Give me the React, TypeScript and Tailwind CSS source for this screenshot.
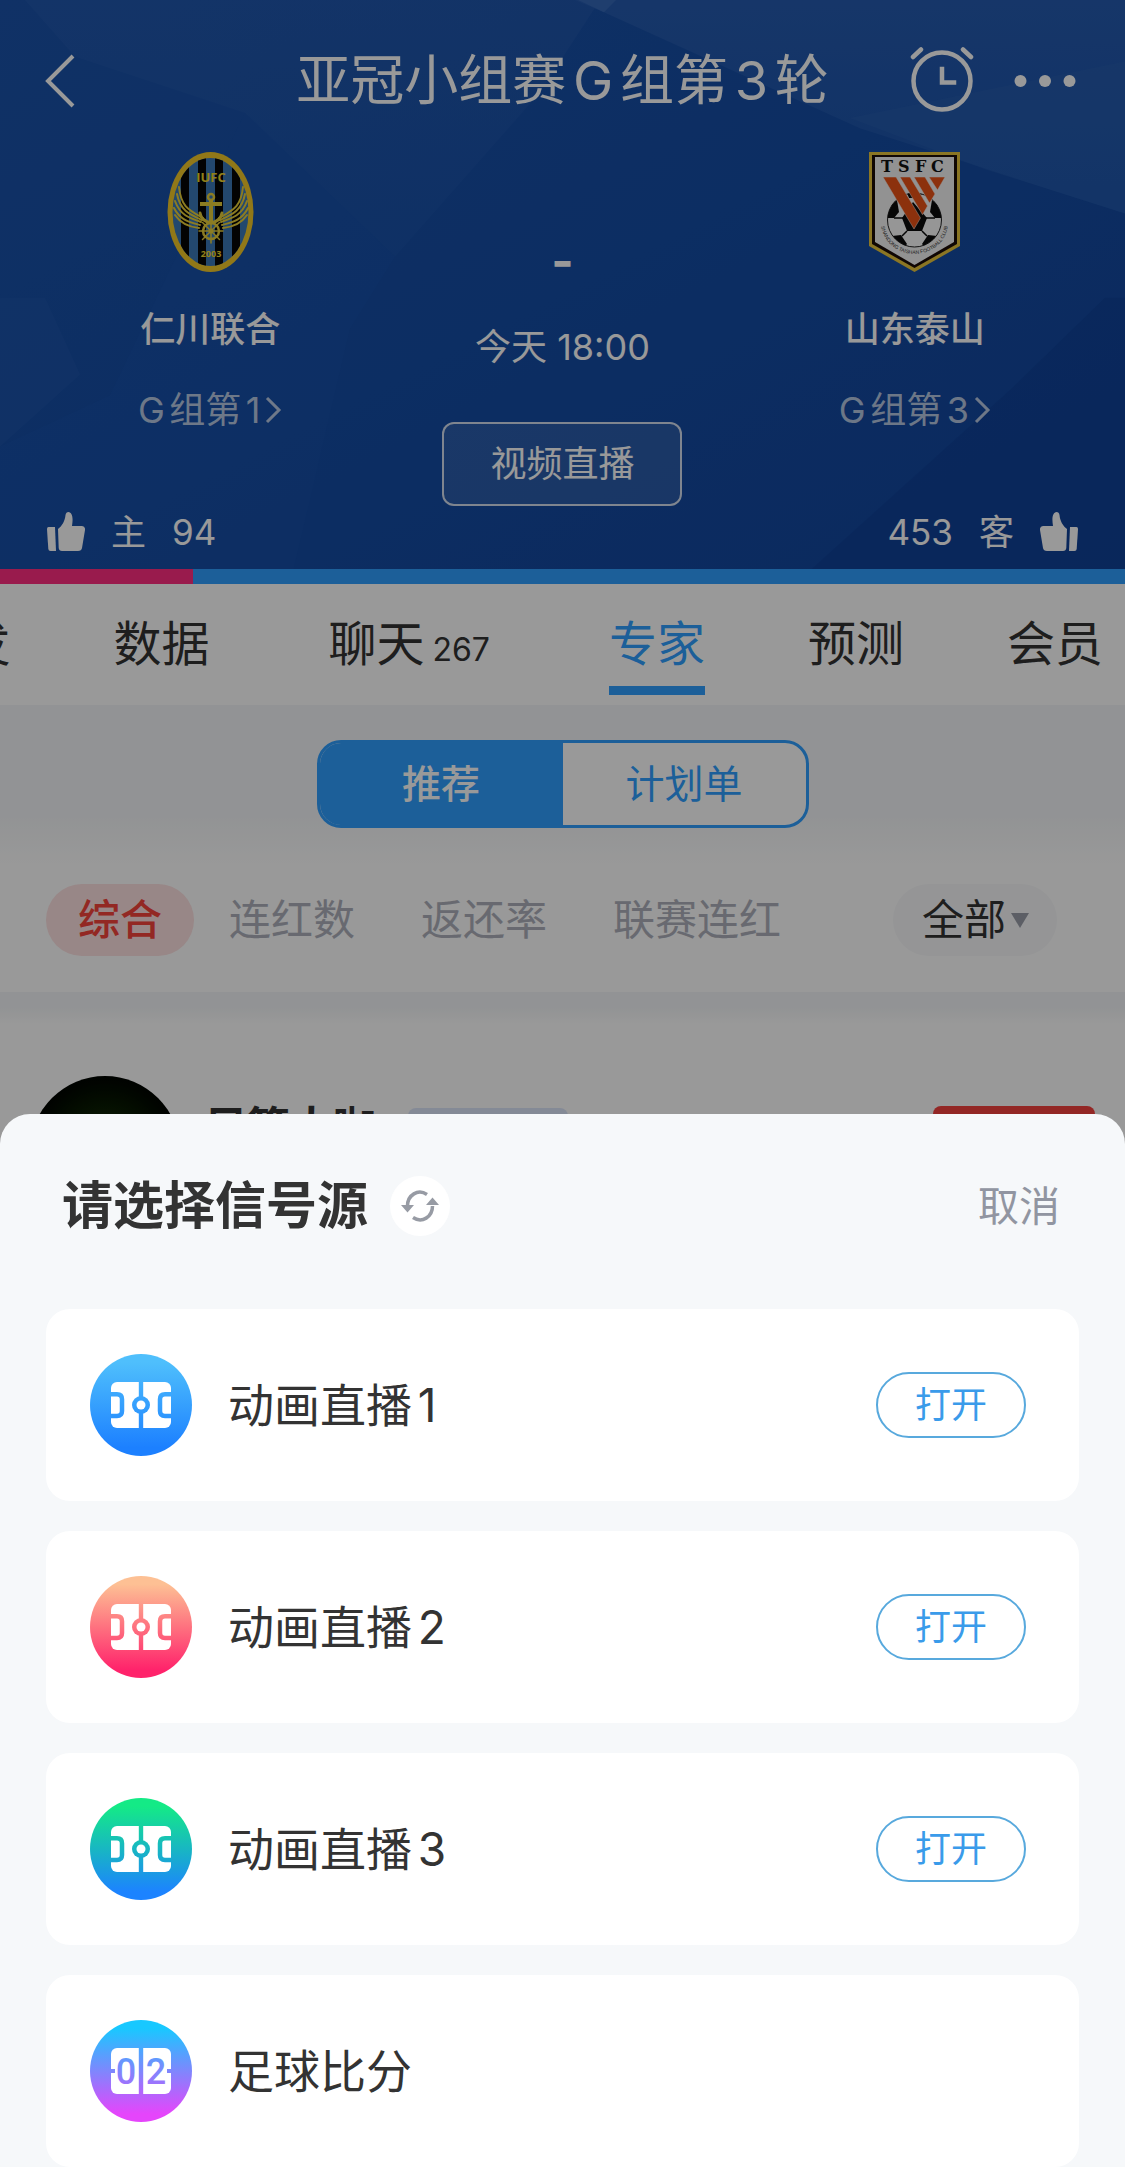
import React, { useState } from 'react';

interface SignalSource {
  id: string;
  name: string;
  from: string;
  to: string;
  kind: 'pitch' | 'score';
}

const sources: SignalSource[] = [
  { id: 'anim1', name: '动画直播1', from: '#4fbffc', to: '#1c80ff', kind: 'pitch' },
  { id: 'anim2', name: '动画直播2', from: '#fdc094', to: '#ff236b', kind: 'pitch' },
  { id: 'anim3', name: '动画直播3', from: '#14ea86', to: '#1c83ff', kind: 'pitch' },
  { id: 'score', name: '足球比分', from: '#18c8ff', to: '#e545fb', kind: 'score' },
];

const tabs = [
  { label: '首发' },
  { label: '数据' },
  { label: '聊天', count: 267 },
  { label: '专家' },
  { label: '预测' },
  { label: '会员' },
];

const filters = ['连红数', '返还率', '联赛连红'];

const HeaderBackdrop: React.FC = () => (
  <svg className="absolute inset-0 h-full w-full" viewBox="0 0 1125 569" preserveAspectRatio="none" aria-hidden="true">
    <defs>
      <linearGradient id="sky" x1="0" y1="0" x2="1" y2="1">
        <stop offset="0" stopColor="#1b53aa" />
        <stop offset="0.5" stopColor="#154da5" />
        <stop offset="1" stopColor="#12459c" />
      </linearGradient>
      <linearGradient id="facet" x1="0" y1="0" x2="0" y2="1">
        <stop offset="0" stopColor="#275cb0" />
        <stop offset="1" stopColor="#1b54aa" />
      </linearGradient>
    </defs>
    <rect width="1125" height="569" fill="url(#sky)" />
    <path d="M25 0H600L540 90L395 250L245 110L75 55Z" fill="url(#facet)" opacity="0.5" />
    <path d="M575 0L604 12L860 125L1125 208V0Z" fill="url(#facet)" opacity="0.9" />
    <path d="M578 0L604 12L616 0Z" fill="#3468b8" />
    <path d="M850 115L985 165L1125 208V60Z" fill="#3064b4" opacity="0.3" />
    <path d="M245 110L395 250L350 320L290 569H0V435L110 385Z" fill="#1a54ab" opacity="0.35" />
    <path d="M0 290H45L80 365L0 435Z" fill="#2459ae" opacity="0.4" />
    <path d="M1105 290L1010 380L795 569H1125V290Z" fill="#0f3f95" opacity="0.6" />
  </svg>
);

const IncheonCrest: React.FC = () => (
  <svg width="87" height="120" viewBox="0 0 87 120" role="img" aria-label="仁川联合">
    <defs>
      <clipPath id="oval">
        <ellipse cx="43.5" cy="60" rx="38" ry="54" />
      </clipPath>
    </defs>
    <ellipse cx="43.5" cy="60" rx="43" ry="60" fill="#f2c928" />
    <g clipPath="url(#oval)">
      <rect width="87" height="120" fill="#3b78b8" />
      <path d="M14 0h8v120h-8zM31 0h8v120h-8zM48 0h8v120h-8zM65 0h8v120h-8z" fill="#050505" />
    </g>
    <text x="44" y="30" textAnchor="middle" className="font-['Open_Sans'] text-[13px] font-bold" fill="#f2d72c">IUFC</text>
    <g fill="none" stroke="#e8cf3a" strokeLinecap="round">
      {/* wings */}
      <path d="M12 35C14 55 22 58 36 66M10 42C13 58 22 62 35 68M8 49C13 63 22 66 34 70M7 56C13 68 22 70 33 73M8 63C14 72 22 75 32 76M76 35C74 55 66 58 52 66M78 42C75 58 66 62 53 68M80 49C75 63 66 66 54 70M81 56C75 68 66 70 55 73M80 63C74 72 66 75 56 76" strokeWidth="2" />
      {/* anchor */}
      <circle cx="44" cy="45" r="3" strokeWidth="2.5" />
      <path d="M44 48V70M33 52H55" strokeWidth="4" strokeLinecap="butt" />
      <path d="M33 61C34 67 39 70 44 71C49 70 54 67 55 61" strokeWidth="3" />
      {/* wheel */}
      <circle cx="44" cy="79" r="8" strokeWidth="2.5" />
      <path d="M44 67V91M32 79H56M35.500 70.500L52.500 87.500M52.500 70.500L35.500 87.500" strokeWidth="1.500" />
    </g>
    <circle cx="44" cy="79" r="2.500" fill="#e8cf3a" />
    <text x="44" y="105" textAnchor="middle" className="font-['Open_Sans'] text-[9px] font-bold" fill="#f2d72c">2003</text>
  </svg>
);

const TaishanCrest: React.FC = () => (
  <svg width="91" height="120" viewBox="0 0 91 120" role="img" aria-label="山东泰山">
    <defs>
      <clipPath id="ball">
        <circle cx="45.500" cy="68" r="27" />
      </clipPath>
      <path id="ribbon" d="M11 66C12 88 25 101 45.500 102C66 101 79 88 80 66" />
    </defs>
    <path d="M0 0H91V94L45.500 120L0 94Z" fill="#e8c53c" />
    <path d="M3 3H88V92L45.500 116L3 92Z" fill="#1b0d08" />
    <path d="M6 5H85V90L45.500 113L6 90Z" fill="#f4f4f4" />
    <text y="20" x="12 29 46 62" className="font-['DejaVu_Serif'] text-[16px] font-bold" fill="#111">TSFC</text>
    <circle cx="45.500" cy="68" r="27" fill="#fafafa" stroke="#222" strokeWidth="1" />
    <g clipPath="url(#ball)" fill="#0a0a0a">
      <path d="M16 66L20 54L28 48L30 60L25 66Z" />
      <path d="M75 66L71 54L63 48L61 60L66 66Z" />
      <path d="M38 41H53L51 46H40Z" />
      <path d="M33 66L44 50L58 66L53 79L38 79Z" />
      <path d="M23 84L32 83L38 92L34 97L24 92Z" />
      <path d="M68 84L59 83L53 92L57 97L67 92Z" />
      <path d="M38 79L33 84M53 79L58 84M25 66H34M66 66H57" stroke="#0a0a0a" strokeWidth="1.500" />
    </g>
    <g fill="#ea5316" stroke="#f4f4f4" strokeWidth="0.500">
      <path d="M14 25H27L51.500 66L45 77Z" />
      <path d="M31 25H41L58.500 54L53.500 62.700Z" />
      <path d="M45 25H56L66 42L60.500 51Z" />
      <path d="M60 25H76L68.500 38Z" />
    </g>
    <text className="font-['Liberation_Sans'] text-[5px]" textAnchor="middle" fill="#333">
      <textPath href="#ribbon" startOffset="50%">SHANDONG TAISHAN FOOTBALL CLUB</textPath>
    </text>
  </svg>
);

const ThumbIcon: React.FC<{ className?: string }> = ({ className }) => (
  <svg width="38" height="40" viewBox="0 0 38 40" fill="#fff" className={className} aria-hidden="true">
    <path d="M1.500 15H8L9 39H3.500Q1.500 39 1.300 37L0 17Q0 15 1.500 15Z" />
    <path d="M11 17C15 14 18 9 18.500 3Q19 0 21.500 0C25 0.500 26.500 5 25 14H35Q38.500 14.500 38 18L35 36Q34.500 39 31 39H15Q12 39 11.700 36Z" />
  </svg>
);

const SourceIcon: React.FC<{ source: SignalSource }> = ({ source }) => {
  const fill = `url(#grad-${source.id})`;
  return (
    <svg width="102" height="102" viewBox="0 0 102 102" className="shrink-0" aria-hidden="true">
      <defs>
        <linearGradient id={`grad-${source.id}`} gradientUnits="userSpaceOnUse" x1="0" y1="0" x2="0" y2="102">
          <stop offset="0.080" stopColor={source.from} />
          <stop offset="0.920" stopColor={source.to} />
        </linearGradient>
      </defs>
      <circle cx="51" cy="51" r="51" fill={fill} />
      <rect x="21" y="28" width="60" height="46" rx="6" fill="#fff" />
      {source.kind === 'pitch' ? (
        <>
          <g fill="none" stroke={fill} strokeWidth="4.500">
            <path d="M20 40.200H27Q32 40.200 32 45.200V57Q32 62 27 62H20" />
            <path d="M82 40.200H75Q70 40.200 70 45.200V57Q70 62 75 62H82" />
            <path d="M48.800 27H53.200V75H48.800Z" fill={fill} stroke="none" />
          </g>
          <circle cx="51" cy="51" r="9" fill={fill} />
          <circle cx="51" cy="51" r="4.500" fill="#fff" />
        </>
      ) : (
        <>
          <path d="M48.800 27H53.200V75H48.800ZM20 49H25V53H20ZM77 49H82V53H77Z" fill={fill} />
          <g fill={fill} textAnchor="middle" className="font-['Liberation_Sans_Narrow',Roboto] text-[36px] font-medium">
            <text x="36" y="64">0</text>
            <text x="66" y="64">2</text>
          </g>
        </>
      )}
    </svg>
  );
};

const RankLink: React.FC<{ text: string }> = ({ text }) => (
  <a href="#rank" className="mt-[41px] flex items-center gap-1 text-4xl leading-10 text-white/70">
    {text}
    <svg width="18" height="28" viewBox="0 0 18 28" fill="none" stroke="currentColor" strokeWidth="3" aria-hidden="true">
      <path d="M3 2L15 14L3 26" />
    </svg>
  </a>
);

const MatchHeader: React.FC = () => (
  <header className="relative overflow-hidden text-white">
    <HeaderBackdrop />
    <div className="relative pt-[47px]">
      <div className="grid h-[62px] grid-cols-[1fr_auto_1fr] items-center pr-[49px] pl-[43px]">
        <button type="button" aria-label="返回" className="justify-self-start">
          <svg width="34" height="56" viewBox="0 0 34 56" fill="none" stroke="#fff" strokeWidth="4" aria-hidden="true">
            <path d="M30 3L5 28L30 53" />
          </svg>
        </button>
        <h1 className="pl-1.5 text-[54px] leading-[62px]">亚冠小组赛G组第3轮</h1>
        <div className="flex items-center gap-10 justify-self-end">
          <button type="button" aria-label="提醒">
            <svg width="64" height="68" viewBox="0 0 64 68" fill="none" stroke="#fff" strokeWidth="4.500" strokeLinecap="round" aria-hidden="true">
              <circle cx="32" cy="34" r="28.500" />
              <path d="M3 10L11 2.500M61 10L53 2.500" />
              <path d="M32 22V35.500H44" strokeLinecap="square" />
            </svg>
          </button>
          <button type="button" aria-label="更多">
            <svg width="62" height="14" viewBox="0 0 62 14" fill="#fff" aria-hidden="true">
              <circle cx="6.500" cy="7" r="6" />
              <circle cx="31" cy="7" r="6" />
              <circle cx="55.500" cy="7" r="6" />
            </svg>
          </button>
        </div>
      </div>

      <div className="grid grid-cols-3 px-[34px] pt-[43px]">
        <div className="flex flex-col items-center">
          <IncheonCrest />
          <span className="mt-[37px] text-[35px] leading-10 font-medium">仁川联合</span>
          <RankLink text="G组第1" />
        </div>
        <div className="flex flex-col items-center pt-[79px]">
          <span className="text-5xl leading-[60px] font-bold">-</span>
          <span className="mt-9 text-4xl leading-10">今天 18:00</span>
          <button type="button" className="mt-[55px] h-[84px] w-[240px] rounded-xl border-2 border-white/80 bg-white/10 text-4xl">
            视频直播
          </button>
        </div>
        <div className="flex flex-col items-center">
          <TaishanCrest />
          <span className="mt-[37px] text-[35px] leading-10 font-medium">山东泰山</span>
          <RankLink text="G组第3" />
        </div>
      </div>

      <div className="mt-1.5 flex justify-between px-[47px] pb-[17px] text-[35px] leading-10">
        <button type="button" className="flex items-center gap-[26px]">
          <ThumbIcon />
          <span>主</span>
          <span>94</span>
        </button>
        <button type="button" className="flex items-center gap-[26px]">
          <span>453</span>
          <span>客</span>
          <ThumbIcon className="-scale-x-100" />
        </button>
      </div>
    </div>
    <div className="relative flex h-[15px] bg-[#309fff]">
      <div className="bg-[#ff2d80]" style={{ width: `${(94 / (94 + 453)) * 100}%` }} />
    </div>
  </header>
);

const App: React.FC = () => {
  const [activeTab, setActiveTab] = useState('专家');
  const [range, setRange] = useState('全部');

  return (
    <div className="relative flex min-h-screen flex-col overflow-hidden bg-white font-[Inter,'Noto_Sans_CJK_SC',sans-serif] text-[#333] [text-autospace:normal]">
      <MatchHeader />

      <nav className="flex h-[121px] justify-end gap-[103px] overflow-hidden pr-[22px]">
        {tabs.map((tab) => (
          <button
            key={tab.label}
            type="button"
            onClick={() => setActiveTab(tab.label)}
            className={`mb-2.5 flex shrink-0 items-baseline gap-2 border-b-[9px] pt-6 text-5xl leading-[72px] ${tab.count ? 'px-4' : ''} ${activeTab === tab.label ? 'border-[#309fff] text-[#309fff]' : 'border-transparent'}`}
          >
            {tab.label}
            {tab.count && <span className="text-[32px]">{tab.count}</span>}
          </button>
        ))}
      </nav>

      <div className="flex justify-center bg-linear-to-b from-[#f4f6f8] from-70% to-white pt-[35px] pb-9">
        <div className="flex h-[88px] w-[492px] overflow-hidden rounded-3xl border-3 border-[#309fff] bg-white text-[39px]">
          <button type="button" className="flex-1 bg-[#309fff] font-medium text-white">推荐</button>
          <button type="button" className="flex-1 text-[#309fff]">计划单</button>
        </div>
      </div>

      <div className="flex items-center py-[20px] pr-[68px] pl-[46px] text-[42px] leading-[72px] text-[#adb0bb]">
        <button type="button" className="rounded-full bg-[#fee1e1] px-8 font-medium text-[#f5443b]">综合</button>
        <div className="ml-[35px] flex flex-1 gap-[66px]">
          {filters.map((name) => (
            <button key={name} type="button">{name}</button>
          ))}
        </div>
        <div className="relative">
          <select
            aria-label="范围"
            value={range}
            onChange={(e) => setRange(e.target.value)}
            className="h-[72px] w-[164px] appearance-none rounded-full bg-[#f8f9fb] pl-[29px] text-[#333]"
          >
            <option>全部</option>
          </select>
          <svg width="18" height="16" viewBox="0 0 18 16" className="pointer-events-none absolute top-7 right-7" aria-hidden="true">
            <path d="M0 1H18L9 16Z" fill="#9a9da8" />
          </svg>
        </div>
      </div>
      <div className="mt-4 h-8 bg-linear-to-b from-[#f4f6f8] from-50% to-white" />

      <article className="flex px-[30px] pt-[52px]">
        <div className="size-[150px] rounded-full bg-radial from-[#1f4208] to-black" />
        <h2 className="mt-[25px] ml-6 text-[43px] leading-[52px] font-bold">足算大咖</h2>
        <span className="mt-[32px] ml-8 h-10 w-[160px] rounded-lg bg-[#dde7fb]" />
        <span className="mt-[30px] ml-auto h-16 w-[162px] rounded-lg bg-[#f5413f]" />
      </article>

      <div className="absolute inset-0 flex flex-col justify-end bg-black/40">
        <section role="dialog" aria-labelledby="sheet-title" className="rounded-t-[30px] bg-[#f6f8fa] px-[46px]">
          <div className="flex items-center pt-[62px] pr-[19px] pb-[73px] pl-4">
            <h2 id="sheet-title" className="text-[51px] leading-[60px] font-bold">请选择信号源</h2>
            <button type="button" aria-label="刷新" className="ml-[22px] flex size-[60px] items-center justify-center rounded-full bg-white">
              <svg width="40" height="34" viewBox="0 0 40 34" fill="none" stroke="#979ba4" strokeWidth="3.500" aria-hidden="true">
                <path d="M27 5.500C18 -0.500 7.500 6 7.500 17" />
                <path d="M13 28.500C22 34.500 32.500 28 32.500 17" />
                <path d="M1 16H14L7.500 23.500ZM39 16H26L32.500 8.500Z" fill="#979ba4" stroke="none" />
              </svg>
            </button>
            <button type="button" className="ml-auto text-[41px] leading-[60px] text-[#9195a1]">取消</button>
          </div>
          <ul className="flex flex-col gap-[30px]">
            {sources.map((source) => (
              <li key={source.id} className="flex h-48 items-center rounded-3xl bg-white pr-[53px] pl-11">
                <SourceIcon source={source} />
                <span className="ml-9 text-[46px] leading-[60px]">{source.name}</span>
                {source.kind === 'pitch' && (
                  <button type="button" className="ml-auto h-[66px] w-[150px] rounded-full border-2 border-[#58a9dd] text-4xl text-[#3a9bea]">
                    打开
                  </button>
                )}
              </li>
            ))}
          </ul>
        </section>
      </div>
    </div>
  );
};

export default App;
